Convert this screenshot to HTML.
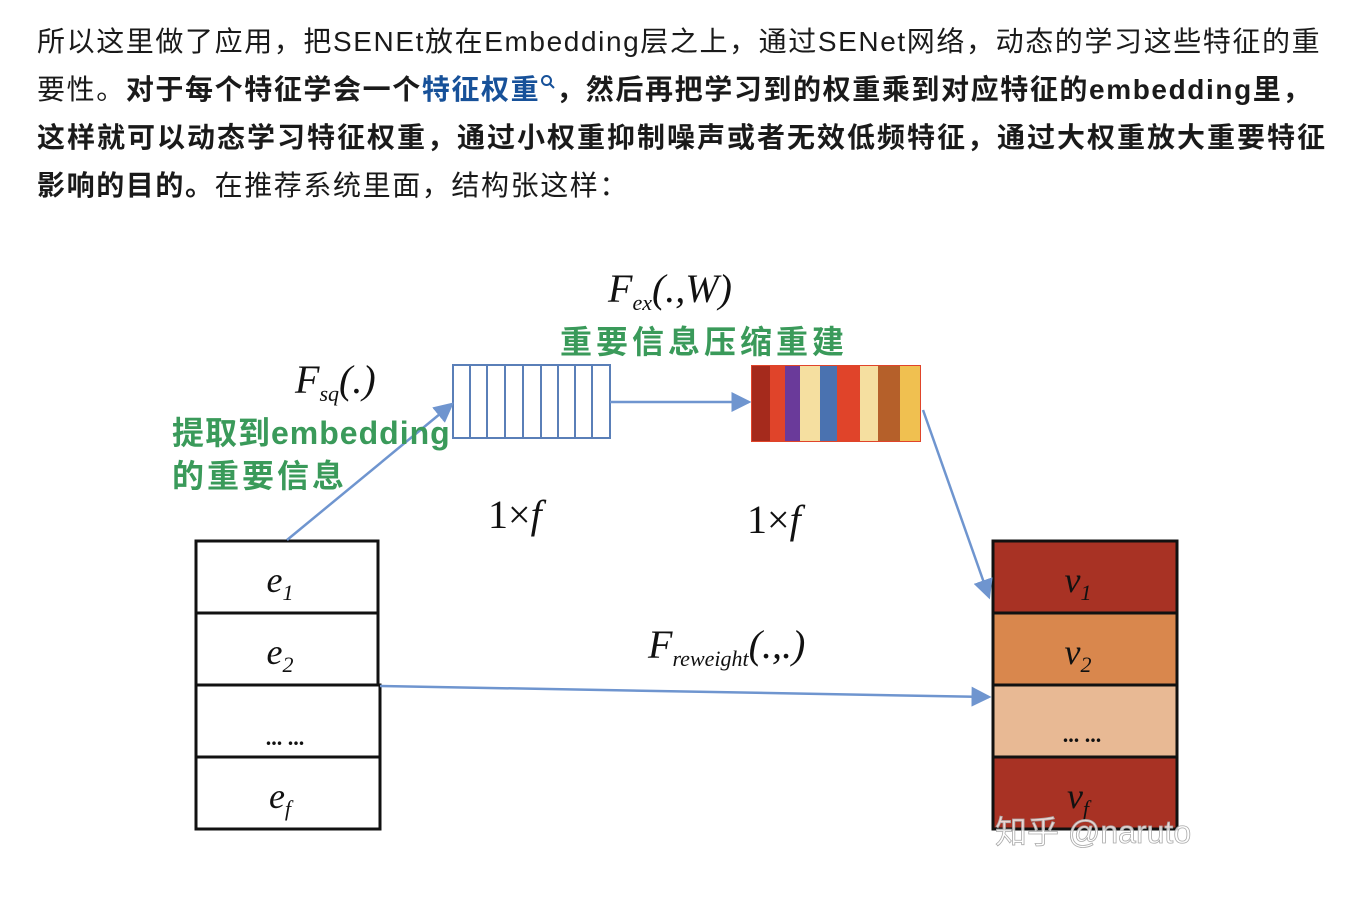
<!DOCTYPE html>
<html><head><meta charset="utf-8"><style>
body{margin:0;background:#fff;width:1352px;height:902px;overflow:hidden;font-family:"Liberation Sans","Noto Sans CJK SC",sans-serif;color:#1a1a1a}
.l{position:absolute;left:37px;font-size:28px;letter-spacing:1.6px;white-space:nowrap;line-height:40px}
b{font-weight:bold}
.a{color:#175199;font-weight:bold}
svg{position:absolute;left:0;top:0}
</style></head><body>
<div class="l" style="top:22px">所以这里做了应用，把SENEt放在Embedding层之上，通过SENet网络，动态的学习这些特征的重</div>
<div class="l" style="top:70px">要性。<b>对于每个特征学会一个</b><span class="a">特征权重</span><svg style="position:relative;display:inline-block;vertical-align:top;margin-top:4px" width="16" height="16" viewBox="0 0 16 16"><circle cx="6.5" cy="6.5" r="4.5" fill="none" stroke="#175199" stroke-width="2"/><path d="M10 10L14 14" stroke="#175199" stroke-width="2"/></svg><b>，然后再把学习到的权重乘到对应特征的embedding里，</b></div>
<div class="l" style="top:118px;letter-spacing:2px"><b>这样就可以动态学习特征权重，通过小权重抑制噪声或者无效低频特征，通过大权重放大重要特征</b></div>
<div class="l" style="top:166px"><b>影响的目的。</b>在推荐系统里面，结构张这样：</div>
<svg width="1352" height="902" viewBox="0 0 1352 902">
<defs><marker id="m" markerWidth="8" markerHeight="8" refX="7" refY="4" orient="auto"><path d="M0,0 L8,4 L0,8z" fill="#6f95cf"/></marker></defs>
<g stroke="#111" stroke-width="3" fill="#fff">
<rect x="196" y="541" width="182" height="72"/><rect x="196" y="613" width="182" height="72"/><rect x="196" y="685" width="184" height="72"/><rect x="196" y="757" width="184" height="72"/>
</g>
<g stroke="#111" stroke-width="3">
<rect x="993" y="541" width="184" height="72" fill="#a83224"/><rect x="993" y="613" width="184" height="72" fill="#d9874d"/><rect x="993" y="685" width="184" height="72" fill="#e8b994"/><rect x="993" y="757" width="184" height="72" fill="#a83224"/>
</g>
<g font-family="Liberation Serif,serif" font-style="italic" font-size="36" fill="#111" text-anchor="middle">
<text x="280" y="592">e<tspan font-size="22" dy="8">1</tspan></text>
<text x="280" y="664">e<tspan font-size="22" dy="8">2</tspan></text>
<text x="285" y="745" font-style="normal" font-size="22" font-weight="bold">... ...</text>
<text x="280" y="808">e<tspan font-size="22" dy="8">f</tspan></text>
<text x="1078" y="592">v<tspan font-size="22" dy="8">1</tspan></text>
<text x="1078" y="664">v<tspan font-size="22" dy="8">2</tspan></text>
<text x="1082" y="742" font-style="normal" font-size="22" font-weight="bold">... ...</text>
<text x="1078" y="808">v<tspan font-size="22" dy="8">f</tspan></text>
</g>
<text x="995" y="843" font-size="32" fill="#fff" fill-opacity="0.8" stroke="#aaa" stroke-width="0.8">知乎 @naruto</text>
<g stroke="#5a7fb8" stroke-width="2" fill="#fff">
<rect x="453" y="365" width="157" height="73"/>
<path d="M470 365V438M487 365V438M505 365V438M523 365V438M541 365V438M558 365V438M575 365V438M592 365V438"/>
</g>
<rect x="751" y="365" width="170" height="77" fill="#e0442a"/>
<rect x="752" y="366" width="18" height="75" fill="#a52a1c"/>
<rect x="785" y="366" width="15" height="75" fill="#6a3a9a"/>
<rect x="800" y="366" width="20" height="75" fill="#f5dfa0"/>
<rect x="820" y="366" width="17" height="75" fill="#4a72b0"/>
<rect x="860" y="366" width="18" height="75" fill="#f5dfa0"/>
<rect x="878" y="366" width="22" height="75" fill="#b5602a"/>
<rect x="900" y="366" width="20" height="75" fill="#f0c050"/>
<g stroke="#6f95cf" stroke-width="2.5" fill="none" marker-end="url(#m)">
<line x1="287" y1="540" x2="452" y2="404"/>
<line x1="610" y1="402" x2="749" y2="402"/>
<line x1="923" y1="410" x2="989" y2="597"/>
<line x1="380" y1="686" x2="989" y2="697"/>
</g>
<g font-family="Liberation Serif,serif" font-style="italic" font-size="40" fill="#111">
<text x="295" y="393">F<tspan font-size="22" dy="8">sq</tspan><tspan dy="-8">(.)</tspan></text>
<text x="608" y="302">F<tspan font-size="22" dy="8">ex</tspan><tspan dy="-8">(.,W)</tspan></text>
<text x="648" y="658">F<tspan font-size="22" dy="8">reweight</tspan><tspan dy="-8">(.,.)</tspan></text>
<text x="488" y="528" font-style="normal">1×<tspan font-style="italic">f</tspan></text>
<text x="747" y="533" font-style="normal">1×<tspan font-style="italic">f</tspan></text>
</g>
<g fill="#3a9a5a" font-size="32" font-weight="bold">
<text x="560" y="353" letter-spacing="4">重要信息压缩重建</text>
<text x="172" y="444" letter-spacing="1">提取到embedding</text>
<text x="172" y="487" letter-spacing="3">的重要信息</text>
</g>
</svg>
</body></html>
